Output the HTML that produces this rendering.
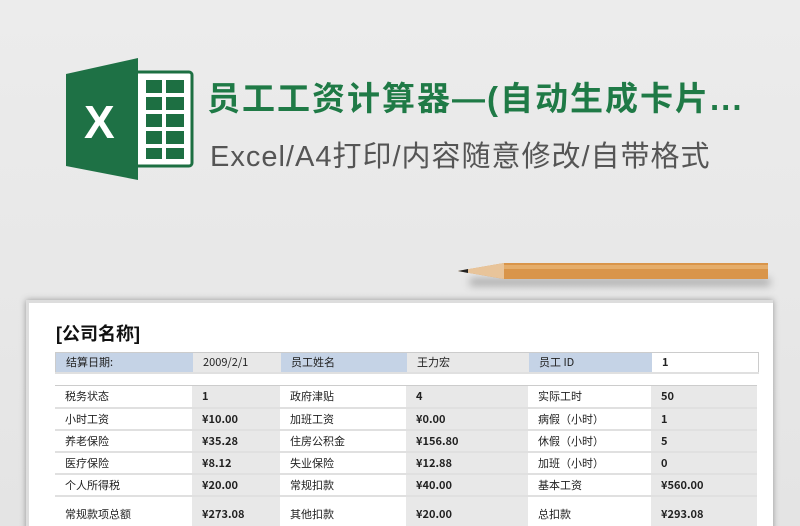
<!DOCTYPE html>
<html style="background:#e6e6e6;overflow:hidden;height:526px"><head><meta charset="utf-8"><style>
body{margin:0;width:800px;height:526px;overflow:hidden;background:linear-gradient(#ececec,#e4e4e4);font-family:"Liberation Sans","Noto Sans CJK SC",sans-serif;position:relative}
.t1{position:absolute;left:207px;top:72px;font-size:33px;font-weight:bold;color:#1f7a46;letter-spacing:2px;white-space:nowrap}
.t2{position:absolute;left:210px;top:133px;font-size:29px;color:#555;white-space:nowrap;letter-spacing:1px}
.paper{position:absolute;left:26px;top:300px;width:744px;height:240px;background:#fff;box-shadow:0 0 6px rgba(0,0,0,.35);border-left:3px solid #ddd;border-top:3px solid #ddd}
table{position:absolute;left:55px;border-collapse:collapse;font-size:11px;color:#222;line-height:14px}
td{padding:0 0 0 10px;border-bottom:2px solid #e0e0e0;vertical-align:middle;font-family:"Noto Sans CJK SC","Liberation Sans",sans-serif}
td.v{background:#e8e8e8;font-weight:bold}
</style></head><body>
<svg style="position:absolute;left:66px;top:58px" width="128" height="122" viewBox="0 0 128 122">
<rect x="68" y="14" width="58" height="94" rx="3" fill="#fff" stroke="#1d6f42" stroke-width="3"/>
<g fill="#1d6f42"><rect x="80" y="22" width="16" height="13"/><rect x="100" y="22" width="18" height="13"/><rect x="80" y="39" width="16" height="13"/><rect x="100" y="39" width="18" height="13"/><rect x="80" y="56" width="16" height="13"/><rect x="100" y="56" width="18" height="13"/><rect x="80" y="73" width="16" height="13"/><rect x="100" y="73" width="18" height="13"/><rect x="80" y="90" width="16" height="11"/><rect x="100" y="90" width="18" height="11"/></g>
<path d="M0 16 L72 0 L72 122 L0 108 Z" fill="#1e7145"/>
<text x="18" y="80" font-family="Liberation Sans" font-weight="bold" font-size="46" fill="#fff">X</text>
</svg>
<div class="t1">员工工资计算器—(自动生成卡片...</div>
<div class="t2">Excel/A4打印/内容随意修改/自带格式</div>
<div style="position:absolute;left:470px;top:278px;width:300px;height:8px;background:rgba(0,0,0,.25);filter:blur(4px)"></div>
<svg style="position:absolute;left:456px;top:261px" width="314" height="20"><path d="M2 10 L48 2 L312 2 L312 18 L48 18 Z" fill="#d9954a"/><path d="M2 10 L48 2 L48 18Z" fill="#e8c49a"/><path d="M2 10 L12 8 L12 12Z" fill="#222"/><rect x="48" y="4" width="264" height="4" fill="#e5ad6a"/></svg>
<div class="paper"></div>
<div style="position:absolute;left:56px;top:320px;font-size:18px;font-weight:bold;color:#111">[公司名称]</div>
<table style="top:352px;border:1px solid #ccc">
<tr style="height:20px"><td style="width:127px;background:#c5d3e6">结算日期:</td><td style="width:78px;background:#e8e8e8">2009/2/1</td><td style="width:116px;background:#c5d3e6">员工姓名</td><td style="width:112px;background:#e8e8e8">王力宏</td><td style="width:113px;background:#c5d3e6">员工 ID</td><td style="width:96px;background:#fff;font-weight:bold">1</td></tr></table>
<table style="top:385px;border-top:1px solid #ccc">
<tr style="height:22px"><td style="width:127px">税务状态</td><td class="v" style="width:78px">1</td><td style="width:116px">政府津贴</td><td class="v" style="width:112px">4</td><td style="width:113px">实际工时</td><td class="v" style="width:96px">50</td></tr>
<tr style="height:22px"><td>小时工资</td><td class="v">¥10.00</td><td>加班工资</td><td class="v">¥0.00</td><td>病假（小时）</td><td class="v">1</td></tr>
<tr style="height:22px"><td>养老保险</td><td class="v">¥35.28</td><td>住房公积金</td><td class="v">¥156.80</td><td>休假（小时）</td><td class="v">5</td></tr>
<tr style="height:22px"><td>医疗保险</td><td class="v">¥8.12</td><td>失业保险</td><td class="v">¥12.88</td><td>加班（小时）</td><td class="v">0</td></tr>
<tr style="height:22px"><td>个人所得税</td><td class="v">¥20.00</td><td>常规扣款</td><td class="v">¥40.00</td><td>基本工资</td><td class="v">¥560.00</td></tr>
<tr style="height:36px"><td>常规款项总额</td><td class="v">¥273.08</td><td>其他扣款</td><td class="v">¥20.00</td><td>总扣款</td><td class="v">¥293.08</td></tr>
</table>
</body></html>
